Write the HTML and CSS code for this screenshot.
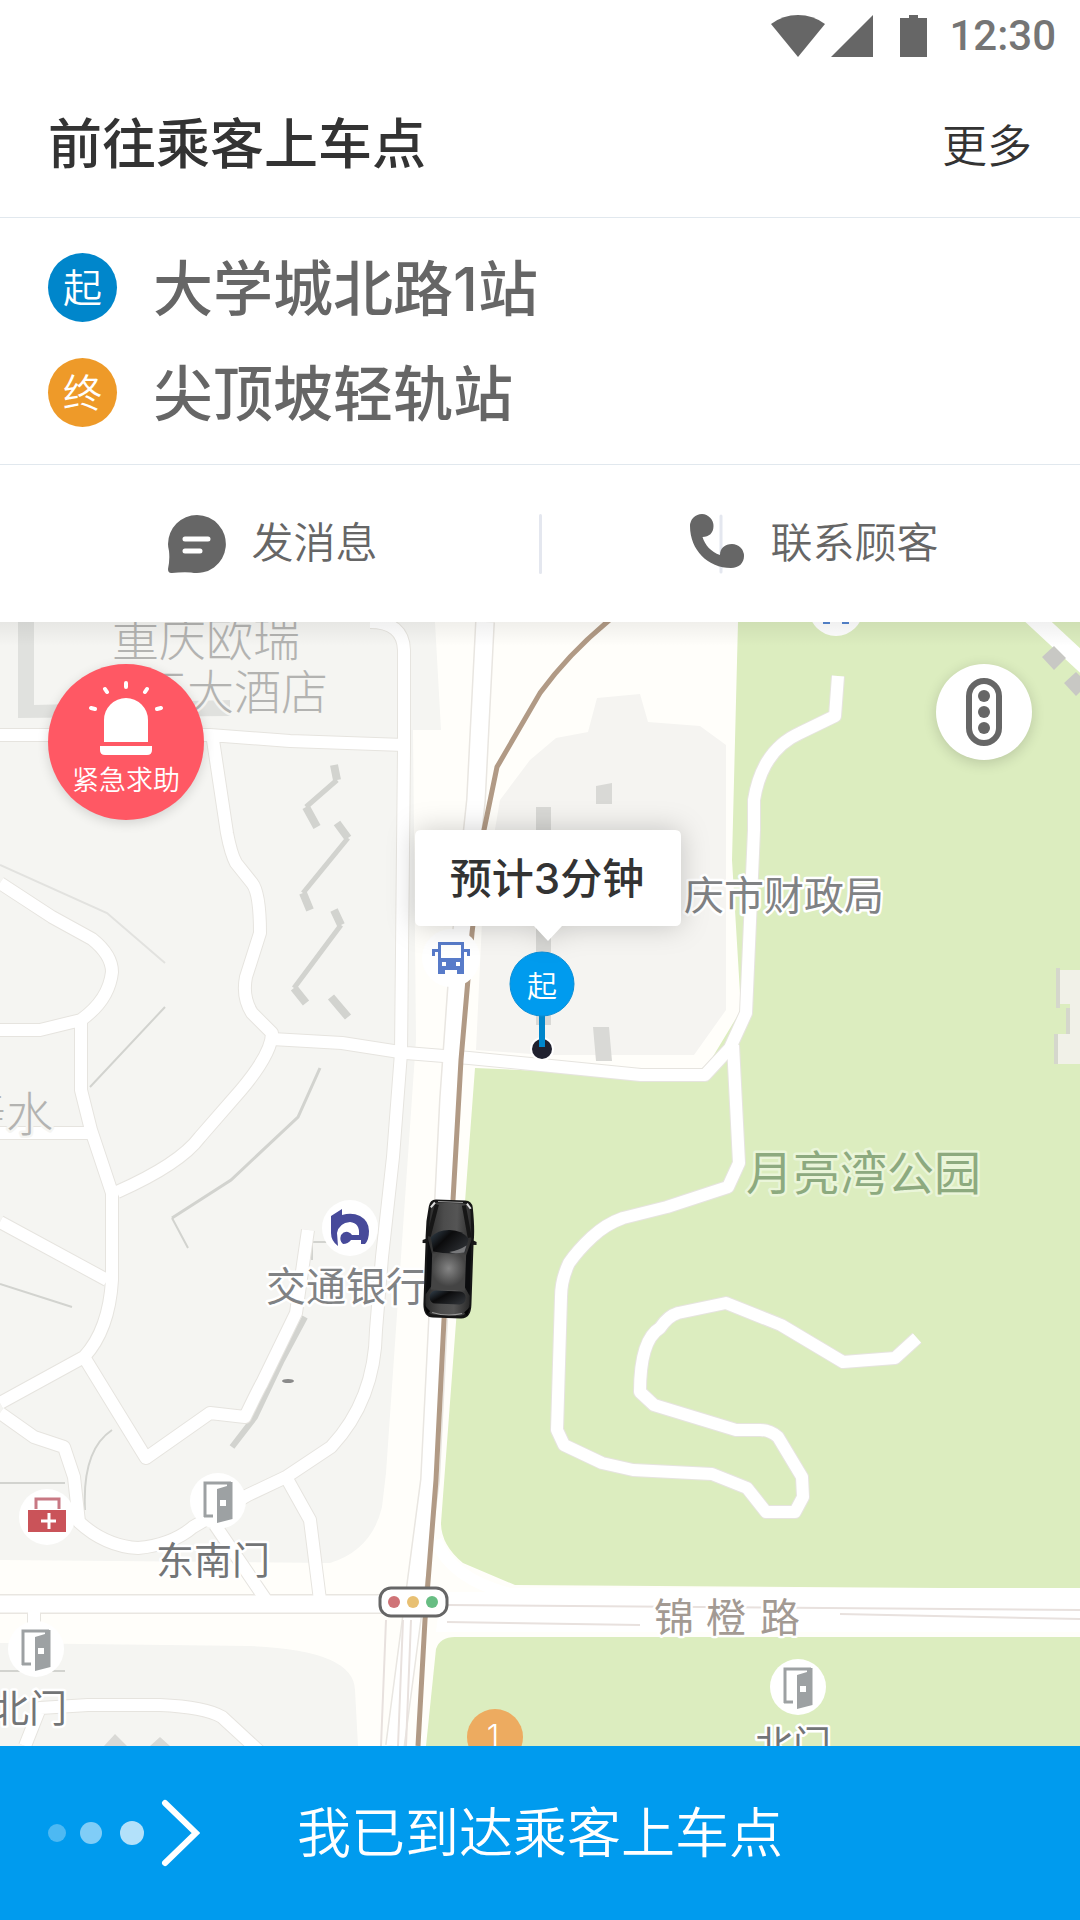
FILE: index.html
```html
<!DOCTYPE html>
<html lang="zh-CN">
<head>
<meta charset="utf-8">
<meta name="viewport" content="width=device-width, initial-scale=1">
<title>前往乘客上车点</title>
<link rel="stylesheet" href="styles.css">
</head>
<body>
<div class="status-bar">
  <svg class="status-icons" viewBox="0 0 156 42" aria-hidden="true">
    <path d="M27 42 0 9Q12 0 27 0T54 9Z"/>
    <path d="M60 42 102 0V42Z"/>
    <path d="M129 42V3H138V0H147V3H156V42Z"/>
  </svg>
  <span class="status-time">12:30</span>
</div>

<header class="header">
  <h1 class="header-title">前往乘客上车点</h1>
  <button class="header-more" type="button">更多</button>
</header>

<ul class="route">
  <li class="stop"><span class="stop-badge stop-badge-start">起</span><span class="stop-name">大学城北路1站</span></li>
  <li class="stop"><span class="stop-badge stop-badge-end">终</span><span class="stop-name">尖顶坡轻轨站</span></li>
</ul>

<nav class="actions">
  <button class="action" type="button">
    <svg class="action-icon" viewBox="0 0 58 60" aria-hidden="true">
      <path fill="#666" d="M29 1A29 29 0 1 1 23 58.400Q12 58 4 59Q0 59.500 0 55Q2 46 1 37Q0 33 0 30A29 29 0 0 1 29 1Z"/>
      <path stroke="#fff" stroke-width="5" stroke-linecap="round" d="M17 25H40M17 37H32"/>
    </svg>
    <span class="action-label">发消息</span>
  </button>
  <button class="action" type="button">
    <svg class="action-icon" viewBox="0 0 58 60" aria-hidden="true">
      <path stroke="#e4e7ef" stroke-width="3" stroke-linecap="round" d="M34 2V58"/>
      <path fill="#666" d="M15 0A12 12 0 0 1 26.500 12C26.500 19 22 23 15.500 23C18 31 24 38 33 41C33 34 38 30 45 30A12 12 0 0 1 57 42C57 49 52 54 44 54C21 54 3 36 3 12A12 12 0 0 1 15 0Z"/>
    </svg>
    <span class="action-label">联系顾客</span>
  </button>
</nav>

<main class="map">
  <svg class="map-canvas" viewBox="0 622 1080 1124" preserveAspectRatio="xMidYMid slice">
    <defs>
      <linearGradient id="carBody" x1="0" x2="1">
        <stop offset="0" stop-color="#2b2b2b"/><stop offset=".35" stop-color="#4c4c4c"/><stop offset=".65" stop-color="#555"/><stop offset="1" stop-color="#2a2a2a"/>
      </linearGradient>
      <radialGradient id="carRoof" cy=".4"><stop offset="0" stop-color="#858585"/><stop offset="1" stop-color="#444"/></radialGradient>
      <linearGradient id="carGlass" x1="0" x2="1" y1="0" y2=".6">
        <stop offset="0" stop-color="#34424e"/><stop offset=".45" stop-color="#0b0b0c"/><stop offset="1" stop-color="#2b2e32"/>
      </linearGradient>
      <g id="door">
        <circle r="28" fill="#fff"/>
        <path d="M-13 16V-18H13" fill="none" stroke="#9da1a3" stroke-width="3"/>
        <path d="M-14 15H-5" stroke="#9da1a3" stroke-width="3"/>
        <path fill="#9da1a3" d="M-1-12 9-15V-19H14.500V18L-1 22Z"/>
        <path fill="#fff" d="M2-1H8V5H2Z"/>
      </g>
      <g id="streets">
        <path d="M0 735H210L290 741 404 745M213 740 227 833Q231 854 236 863L252 883Q260 893 260 933L246 977Q242 997 252 1013L272 1033Q272 1053 241 1090L200 1137Q180 1164 117 1192"/>
        <path d="M0 883 52 917 92 939Q112 955 112 972Q109 1000 81 1020L40 1030H0M81 1020V1090L91 1130 112 1193V1280Q109 1330 84 1357L0 1403M0 1133H90M0 1222 107 1280"/>
        <path d="M84 1357 146 1458 210 1413 245 1417Q258 1390 262 1383L296 1313 308 1230M0 1413 34 1437 64 1447 74 1477 79 1522Q105 1546 138 1548Q172 1545 193 1527L248 1495 286 1477 331 1447Q375 1400 376 1330L382 1257 393 1157 401 1053 404 750V650Q403 622 370 622M286 1477 310 1520 320 1600M215 1525 266 1600M34 1608V1640"/>
        <path d="M25 1746 40 1708 88 1705H160Q205 1707 222 1717L260 1752M272 1039 342 1043 406 1053 469 1058 551 1066 641 1075H705L730 1048 746 1013 754 830V800Q762 750 800 733L835 716 838 676"/>
        <path d="M733 1045 739 1163 728 1187 667 1207 623 1218Q606 1224 592 1237T569 1263Q561 1280 561 1297L557 1430 564 1445 602 1463 633 1470 712 1474 747 1488 766 1512H795L803 1497 802 1477 778 1437Q770 1430 760 1430H736L654 1405 640 1392Q640 1340 660 1328Q668 1316 678 1313L726 1303 781 1325 843 1362 895 1358 917 1338"/>
      </g>
    </defs>

    <!-- land, park and avenues -->
    <path fill="#fffefa" d="M0 622H1080V1746H0Z"/>
    <path fill="#f5f5f2" d="M0 622H435L441 730H413L416 1040 386 1473 382 1507Q372 1550 330 1563L0 1560ZM0 1643 250 1646Q354 1650 355 1690L358 1746H0Z"/>
    <path fill="#f5f4f1" d="M556 738 588 732 597 698 640 694 648 722 700 726 726 745V1010L694 1055H545L476 1050 483 900 500 800 530 760Z"/>
    <path fill="#dcedbf" d="M738 622H1080V1589L515 1585 463 1563Q441 1545 441 1523L475 1068 700 1078 741 1010 732 860Z"/>
    <path fill="#dcedbf" d="M455 1637H1080V1746H426L436 1649Q440 1637 455 1637Z"/>

    <!-- building edges -->
    <g fill="none" stroke="#d2d3cf" stroke-width="8">
      <path d="M334 765 337 780"/>
      <path stroke-width="5" d="M337 780 306 807M348 838 303 893M341 925 294 988"/>
      <path d="M306 807 317 827M337 823 348 838M303 893 310 910M334 910 341 925M294 988 306 1003M331 997 348 1017"/>
      <path stroke-width="3" d="M320 1068 298 1117 231 1180 172 1218"/>
      <path stroke-width="6" d="M305 1317 282 1360 255 1417 232 1447"/>
      <path stroke-width="2" d="M165 1007 90 1087M0 1284 72 1307M172 1218 188 1248M0 1483H65M85 1510Q82 1450 112 1430M0 1671H65M312 1260V1242H335"/>
      <path stroke="#e2e2df" stroke-width="2" d="M0 865 107 913 165 963"/>
    </g>
    <path fill="#e0e1de" d="M18 622H34V705L230 700V716L18 718Z"/>
    <path fill="#d9d9d6" d="M536 807H551V1025H536ZM596 786 612 783V804H596ZM593 1027H609L612 1061H596ZM104 1746 115 1734 127 1746ZM150 1746 160 1737 170 1746Z"/>
    <path fill="#f1f1e8" d="M1080 970H1060V1004H1070V1034H1058V1064H1080Z"/>
    <path fill="#d5d7cc" d="M1056 968H1060V1008H1056ZM1066 1008H1070V1034H1066ZM1054 1034H1058V1064H1054Z"/>
    <path stroke="#fff" stroke-width="18" fill="none" d="M1030 614 1088 668"/>
    <path fill="#c8c8c4" d="M1042 657 1054 646 1066 658 1054 670ZM1064 683 1076 672 1088 684 1076 696Z"/>

    <!-- streets with a light casing -->
    <use href="#streets" fill="none" stroke="#e6e4df" stroke-width="14" stroke-linejoin="round"/>
    <path fill="none" stroke="#e9e6e1" stroke-width="20" d="M485 622 476 800 459 960 449 1100 430 1480 395 1746M-5 1604H1085"/>
    <path fill="#fff" d="M441 1592H1080V1632H436Z"/>
    <use href="#streets" fill="none" stroke="#fff" stroke-width="12" stroke-linejoin="round"/>
    <path fill="none" stroke="#fff" stroke-width="17" d="M485 622 476 800 459 960 449 1100 430 1480 395 1746M-5 1604H1085"/>
    <path fill="none" stroke="#fff" stroke-width="12" d="M436 1540Q450 1578 510 1594H1080"/>
    <path fill="none" stroke="#e8e1de" stroke-width="2" d="M447 1605 1080 1610M447 1622 640 1625M840 1614 1080 1619M403 1620 398 1746M411 1620 406 1746M386 1620 381 1746"/>
    <path fill="none" stroke="#b19a85" stroke-width="5" d="M612 618Q570 652 540 693L497 767 484 830 472 933 461 1060 453 1200 444 1320 436 1480 425 1620 418 1746"/>
    <ellipse cx="288" cy="1381" rx="6" ry="2" fill="#8a8a8a"/>

    <!-- points of interest -->
    <g transform="translate(451 958)">
      <circle r="29" fill="#fff"/>
      <path fill="#587bc9" d="M-13-16H13V-9H19V-2H16V-6H13V16H6V12H-6V16H-13V-6H-16V-2H-19V-9H-13Z"/>
      <path fill="#fff" d="M-10-13H10V0H-10ZM-9 4H-5V8H-9ZM5 4H9V8H5Z"/>
    </g>
    <g transform="translate(350 1228)">
      <circle r="28" fill="#fff"/>
      <path fill="#474a9a" d="M-19-12-8-19V-13Q2-16 10-12Q19-7 19 3Q19 12 15 16H11V12H1Q-2 16-7 16Q-11 13-9 7Q-6 3-2 4Q1 5 2 7H9Q10-5 0-6Q-11-5-13 5L-12 18Q-19 13-19 5Z"/>
    </g>
    <g transform="translate(47 1517)">
      <circle r="28" fill="#fff"/>
      <path fill="none" stroke="#c87883" stroke-width="3" d="M-11-8V-18H12V-8"/>
      <path fill="#ca5359" d="M-19-7H19V15H-19Z"/>
      <path stroke="#fff" stroke-width="3" d="M-6 4H9M2-4V12"/>
    </g>
    <use href="#door" x="218" y="1501"/>
    <use href="#door" x="36" y="1649"/>
    <use href="#door" x="798" y="1687"/>
    <circle cx="836" cy="609" r="27" fill="#fff"/>
    <path fill="#5585cf" d="M823 620H830V624H823ZM842 620H849V624H842Z"/>
    <rect x="380" y="1588" width="67" height="28" rx="11" fill="#fff" stroke="#666" stroke-width="3"/>
    <circle cx="394" cy="1602" r="6" fill="#cf7377"/><circle cx="413" cy="1602" r="6" fill="#e8c073"/><circle cx="432" cy="1602" r="6" fill="#67bd83"/>
    <circle cx="495" cy="1737" r="28" fill="#edab60"/>
    <text class="poi-number" x="493" y="1748">1</text>

    <!-- place names -->
    <g class="place">
      <text class="place-hotel" x="112" y="656">重庆欧瑞</text>
      <text class="place-hotel" x="140" y="709">正大酒店</text>
      <text class="place-hotel" x="-41" y="1131">寿水</text>
      <text class="place-office" x="684" y="910">庆市财政局</text>
      <text class="place-office" x="266" y="1301">交通银行</text>
      <text class="place-park" x="746" y="1190">月亮湾公园</text>
      <text class="place-gate" x="156" y="1574">东南门</text>
      <text class="place-gate" x="-9" y="1722">北门</text>
      <text class="place-gate" x="755" y="1758">北门</text>
      <text class="place-road" x="654 706 760" y="1632">锦橙路</text>
    </g>

    <!-- driver's car -->
    <g transform="translate(449 1259) rotate(2)">
      <path fill="#181818" d="M-27-18-20-21V-15H-27ZM27-18 20-21V-15H27Z"/>
      <path fill="#161616" d="M-15-59H14Q21-59 22-52Q25-30 24-18V45Q24 59 14 59H-14Q-24 59-24 45V-18Q-25-35-22-52Q-21-59-15-59Z"/>
      <path fill="url(#carBody)" d="M-14-56H13Q19-56 20-48L22-16V44Q21 56 13 56H-13Q-21 56-22 44V-16L-20-48Q-19-56-14-56Z"/>
      <path fill="none" stroke="#161616" stroke-width="4" d="M-14-54-21-22M13-54 20-22"/>
      <path fill="url(#carGlass)" d="M-19-21Q-12-29 0-29T19-21L16-7Q0-4-16-7Z"/>
      <path fill="#77787a" d="M17-14 15-7Q4-5 0-7Q10-9 17-14Z"/>
      <rect x="-17" y="-5" width="34" height="36" fill="url(#carRoof)"/>
      <path fill="#0b0c0e" d="M-22-20-17-4V28L-22 36ZM22-20 17-4V28L22 36Z"/>
      <rect x="-18" y="32" width="36" height="13" rx="6" fill="url(#carGlass)"/>
      <path fill="none" stroke="#999" d="M-13-57H12M-15 54Q0 58 15 54"/>
      <path stroke="#ddd" stroke-width="2" d="M-20-51-16-56M20-51 16-56"/>
      <path fill="#050505" d="M-23 47-17 53-20 56ZM23 47 17 53 20 56Z"/>
    </g>

    <!-- pick-up pin and arrival estimate -->
    <circle cx="542" cy="1049" r="12" fill="#fff"/>
    <circle cx="542" cy="1049" r="10" fill="#20212f"/>
    <path stroke="#0086cb" stroke-width="6" d="M542 1014V1047"/>
    <circle cx="542" cy="984" r="32" fill="#009bee" stroke="#0b8fd8"/>
    <text class="pin-text" x="542" y="997">起</text>
    <path class="estimate" d="M421 830H675Q681 830 681 836V920Q681 926 675 926H562L548 941 534 926H421Q415 926 415 920V836Q415 830 421 830Z"/>
    <text class="estimate-text" x="547" y="894">预计3分钟</text>
  </svg>
  <button class="sos" type="button">
    <svg class="sos-icon" viewBox="0 0 74 76" fill="#fff" aria-hidden="true">
      <path d="M15 63V41A22 22 0 0 1 59 41V63ZM11 67H63V71Q63 76 58 76H16Q11 76 11 71Z"/>
      <path stroke="#fff" stroke-width="4" stroke-linecap="round" d="M37 4V8M16 10 18 13M58 10 56 13M2 29 6 30M72 29 68 30"/>
    </svg>
    <span>紧急求助</span>
  </button>
  <button class="traffic" type="button" aria-label="路况">
    <svg class="traffic-icon" viewBox="0 0 36 68" aria-hidden="true">
      <rect x="3" y="3" width="30" height="62" rx="15" fill="none" stroke="#666" stroke-width="6"/>
      <circle cx="18" cy="18" r="6" fill="#666"/><circle cx="18" cy="34" r="6" fill="#666"/><circle cx="18" cy="50" r="6" fill="#666"/>
    </svg>
  </button>
</main>

<button class="arrive" type="button">
  <svg class="arrive-icon" viewBox="0 0 152 68" aria-hidden="true">
    <circle cx="9" cy="34" r="9" fill="#fff" fill-opacity=".3"/>
    <circle cx="43" cy="34" r="11" fill="#fff" fill-opacity=".5"/>
    <circle cx="84" cy="34" r="12" fill="#fff" fill-opacity=".7"/>
    <path d="M117 4 148 34 117 64" fill="none" stroke="#fff" stroke-width="6" stroke-linecap="round"/>
  </svg>
  <span class="arrive-label">我已到达乘客上车点</span>
</button>
</body>
</html>
```
FILE: styles.css
```css
* {
  box-sizing: border-box;
}

body {
  display: flex;
  flex-direction: column;
  min-height: 100vh;
  margin: 0;
  background: #fff;
  color: #333;
  font-family: Inter, "Noto Sans CJK SC", sans-serif;
  font-weight: 350;
}

button {
  padding: 0;
  border: 0;
  background: none;
  color: inherit;
  font: inherit;
}

.status-bar {
  display: flex;
  align-items: center;
  justify-content: flex-end;
  gap: 22px;
  height: 72px;
  padding-right: 24px;
}

.status-icons {
  width: 156px;
  height: 42px;
  fill: #666;
}

.status-time {
  color: #757575;
  font: 500 42px/48px Roboto, sans-serif;
}

.header {
  display: flex;
  align-items: center;
  justify-content: space-between;
  height: 146px;
  padding: 0 48px;
  border-bottom: 1px solid #e1e8ee;
}

.header-title {
  margin: 0;
  font-size: 54px;
  font-weight: 500;
  line-height: 78px;
}

.header-more {
  padding-top: 4px;
  font-size: 45px;
  line-height: 66px;
}

.route {
  display: flex;
  flex-direction: column;
  gap: 36px;
  margin: 0;
  padding: 35px 48px 37px;
  border-bottom: 1px solid #e1e8ee;
  list-style: none;
}

.stop {
  display: flex;
  align-items: center;
  gap: 36px;
  height: 69px;
}

.stop-badge {
  width: 69px;
  height: 69px;
  border-radius: 50%;
  color: #fff;
  font-size: 39px;
  line-height: 69px;
  text-align: center;
}

.stop-badge-start {
  background: #0086cb;
}

.stop-badge-end {
  background: #ee9a29;
}

.stop-name {
  padding-top: 4px;
  color: #666;
  font-size: 60px;
  font-weight: 500;
  line-height: 69px;
}

.actions {
  position: relative;
  display: grid;
  grid-template-columns: 1fr 1fr;
  height: 157px;
}

.actions::after {
  content: "";
  position: absolute;
  top: 49px;
  left: 50%;
  width: 3px;
  height: 60px;
  margin-left: -1px;
  border-radius: 2px;
  background: #e4e7ef;
}

.action {
  display: flex;
  align-items: center;
  justify-content: center;
  gap: 25px;
  padding-left: 6px;
  color: #666;
  font-size: 42px;
  line-height: 60px;
}

.action-label {
  padding-bottom: 2px;
}

.action-icon {
  width: 58px;
  height: 60px;
  fill: none;
}

.map {
  position: relative;
  flex: 1;
  min-height: 600px;
  overflow: hidden;
}

.map::before {
  content: "";
  position: absolute;
  inset: 0 0 auto;
  z-index: 1;
  height: 24px;
  background: linear-gradient(rgba(0, 0, 0, 0.06), transparent);
}

.map-canvas {
  position: absolute;
  width: 100%;
  height: 100%;
}

.place {
  fill: #808284;
  stroke: #fff;
  stroke-width: 5px;
  stroke-linejoin: round;
  paint-order: stroke;
  font-family: "Noto Sans CJK SC", sans-serif;
  font-weight: 400;
}

.place-hotel {
  fill: #b3b3b1;
  stroke: #f5f5f2;
  font-size: 47px;
  font-weight: 300;
}

.place-office {
  font-size: 40px;
}

.place-park {
  fill: #8daa7f;
  stroke: #eaf5d9;
  font-size: 47px;
}

.place-gate {
  fill: #737577;
  font-size: 38px;
}

.place-road {
  fill: #a39a93;
  font-size: 40px;
}

.poi-number {
  fill: #fff;
  font-size: 32px;
  text-anchor: middle;
}

.pin-text {
  fill: #fff;
  font-size: 30px;
  text-anchor: middle;
}

.estimate {
  fill: #fff;
  filter: drop-shadow(0 0 14px rgba(0, 0, 0, 0.2));
}

.estimate-text {
  fill: #333;
  font-size: 42px;
  font-weight: 500;
  text-anchor: middle;
}

.sos {
  position: absolute;
  top: 42px;
  left: 48px;
  display: flex;
  flex-direction: column;
  align-items: center;
  gap: 6px;
  width: 156px;
  height: 156px;
  padding-top: 15px;
  border-radius: 50%;
  background: #ff5864;
  box-shadow: 0 3px 12px rgba(0, 0, 0, 0.14);
  color: #fff;
  font-size: 27px;
  line-height: 39px;
}

.sos-icon {
  width: 74px;
  height: 76px;
}

.traffic {
  position: absolute;
  top: 42px;
  right: 48px;
  display: grid;
  place-items: center;
  width: 96px;
  height: 96px;
  border-radius: 50%;
  background: #fff;
  box-shadow: 0 3px 14px rgba(0, 0, 0, 0.16);
}

.traffic-icon {
  width: 36px;
  height: 68px;
}

.arrive {
  display: grid;
  grid-template-columns: 1fr auto 1fr;
  align-items: center;
  height: 174px;
  padding: 0 48px;
  background: #009bee;
  color: #fff;
  font-size: 54px;
  line-height: 78px;
}

.arrive-icon {
  width: 152px;
  height: 68px;
}

.arrive-label {
  padding-top: 2px;
}
```
